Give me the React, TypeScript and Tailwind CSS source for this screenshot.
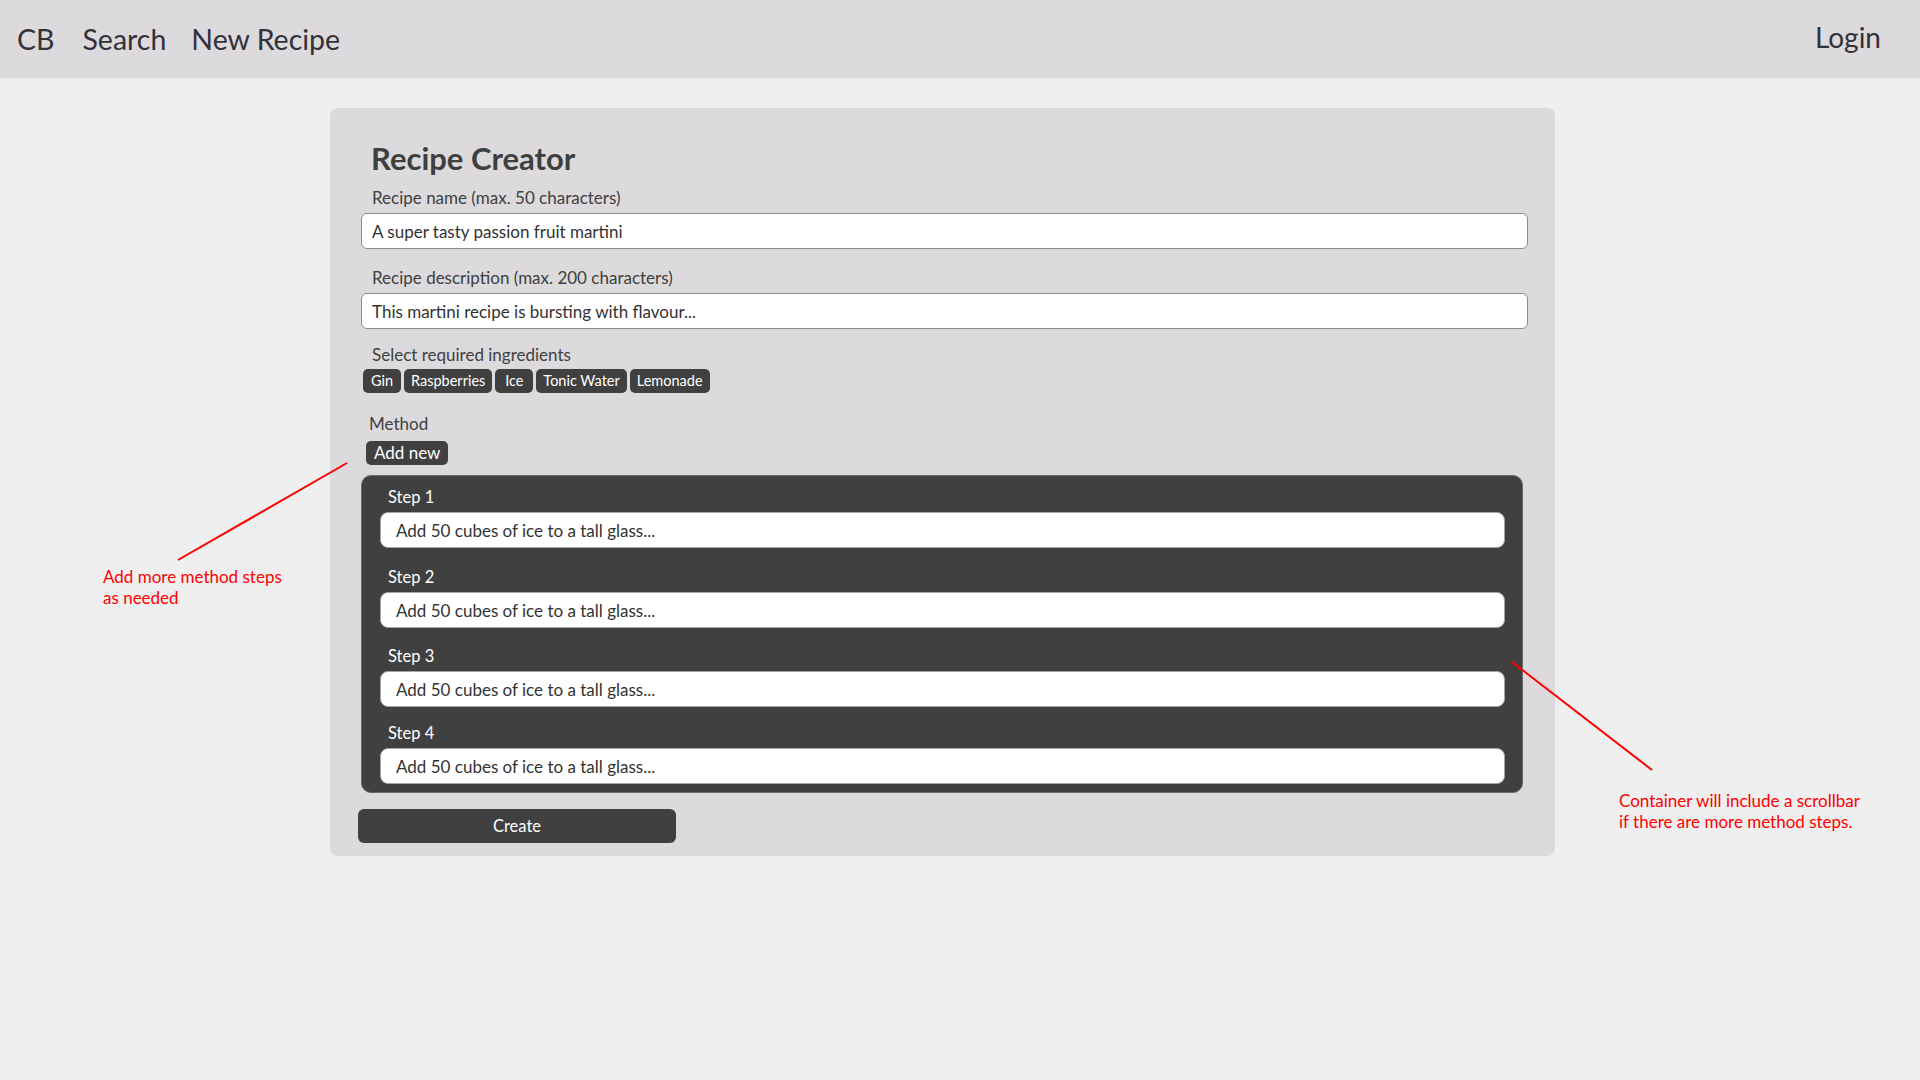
import { useState } from "react"

const ingredients = ["Gin", "Raspberries", "Ice", "Tonic Water", "Lemonade"]

// gap above each step, taken from the mockup
const stepGaps = ["", "mt-[19px]", "mt-[18px]", "mt-[16px]"]

export default function App() {
  const [name, setName] = useState("A super tasty passion fruit martini")
  const [description, setDescription] = useState("This martini recipe is bursting with flavour...")
  const [steps, setSteps] = useState<string[]>([
    "Add 50 cubes of ice to a tall glass...",
    "Add 50 cubes of ice to a tall glass...",
    "Add 50 cubes of ice to a tall glass...",
    "Add 50 cubes of ice to a tall glass...",
  ])

  const updateStep = (i: number, value: string) => {
    setSteps((prev) => prev.map((s, idx) => (idx === i ? value : s)))
  }

  return (
    <div className="relative min-h-screen bg-[#efefef] font-['Lato',sans-serif] text-[#404040]">
      {/* Top navigation */}
      <header className="flex h-[78px] items-start justify-between bg-[#dcdadd] pl-[17px] pr-[39px] text-[#33313a]">
        <nav className="flex items-start pt-[24px] text-[28.5px] leading-[30px]">
          <a className="mr-[28px]">CB</a>
          <a className="mr-[25px]">Search</a>
          <a>New Recipe</a>
        </nav>
        <a className="pt-[20px] text-[28px] leading-[34px]">Login</a>
      </header>

      {/* Recipe creator card */}
      <main className="ml-[330px] mt-[30px] w-[1225px] rounded-lg bg-[#dcdadd] pb-[13px] pl-[31px] pr-[27px] pt-[34px]">
        <h1 className="ml-[10px] text-[31px] font-bold leading-[32px] text-[#3f3f3f]">Recipe Creator</h1>

        <label className="ml-[11px] mt-[14px] block text-[17px] leading-[20px]">Recipe name (max. 50 characters)</label>
        <input
          className="mt-[5px] block h-[36px] w-full rounded-md border border-[#8c8c8c] bg-white pl-[10px] text-[17px] text-[#333] outline-none"
          value={name}
          onChange={(e) => setName(e.target.value)}
        />

        <label className="ml-[11px] mt-[19px] block text-[17px] leading-[20px]">Recipe description (max. 200 characters)</label>
        <input
          className="mt-[5px] block h-[36px] w-full rounded-md border border-[#8c8c8c] bg-white pl-[10px] text-[17px] text-[#333] outline-none"
          value={description}
          onChange={(e) => setDescription(e.target.value)}
        />

        <p className="ml-[11px] mt-[16px] text-[17px] leading-[20px]">Select required ingredients</p>
        <div className="ml-[2px] mt-[4px] flex gap-[3px]">
          {ingredients.map((item) => (
            <button
              key={item}
              className="h-[24px] min-w-[38px] rounded-[5px] bg-[#404040] px-[7px] text-center text-[14.5px] leading-[24px] text-white"
            >
              {item}
            </button>
          ))}
        </div>

        <p className="ml-[8px] mt-[21px] text-[17px] leading-[20px]">Method</p>
        <button
          className="ml-[5px] mt-[7px] h-[24px] rounded-[5px] bg-[#404040] px-[8px] text-[17px] leading-[24px] text-white"
          onClick={() => setSteps((prev) => [...prev, ""])}
        >
          Add new
        </button>

        {/* Method steps (scrolls when there are more) */}
        <div className="mr-[5px] mt-[10px] max-h-[318px] overflow-y-auto rounded-[10px] border border-[#6a6a6a] bg-[#404040] pb-[8px] pl-[18px] pr-[17px] pt-[11px]">
          {steps.map((step, i) => (
            <div key={i} className={stepGaps[i] ?? "mt-[18px]"}>
              <p className="ml-[8px] text-[16.5px] leading-[20px] text-white">Step {i + 1}</p>
              <input
                className="mt-[5px] block h-[36px] w-full rounded-lg border border-[#a6a6a6] bg-white pl-[15px] text-[17px] text-[#333] outline-none"
                value={step}
                onChange={(e) => updateStep(i, e.target.value)}
              />
            </div>
          ))}
        </div>

        <button className="-ml-[3px] mt-[16px] block h-[34px] w-[318px] rounded-md bg-[#404040] text-[16.5px] text-white">
          Create
        </button>
      </main>

      {/* Annotations */}
      <svg className="pointer-events-none absolute left-0 top-0 h-[1080px] w-[1920px]" viewBox="0 0 1920 1080">
        <line x1="178" y1="560" x2="347" y2="463" stroke="#ff0000" strokeWidth="2" />
        <line x1="1512" y1="662" x2="1652" y2="770" stroke="#ff0000" strokeWidth="2" />
      </svg>
      <p className="absolute left-[103px] top-[566px] text-[17px] leading-[21px] text-[#ff0000]">
        Add more method steps
        <br />
        as needed
      </p>
      <p className="absolute left-[1619px] top-[790px] text-[17px] leading-[21px] text-[#ff0000]">
        Container will include a scrollbar
        <br />
        if there are more method steps.
      </p>
    </div>
  )
}
